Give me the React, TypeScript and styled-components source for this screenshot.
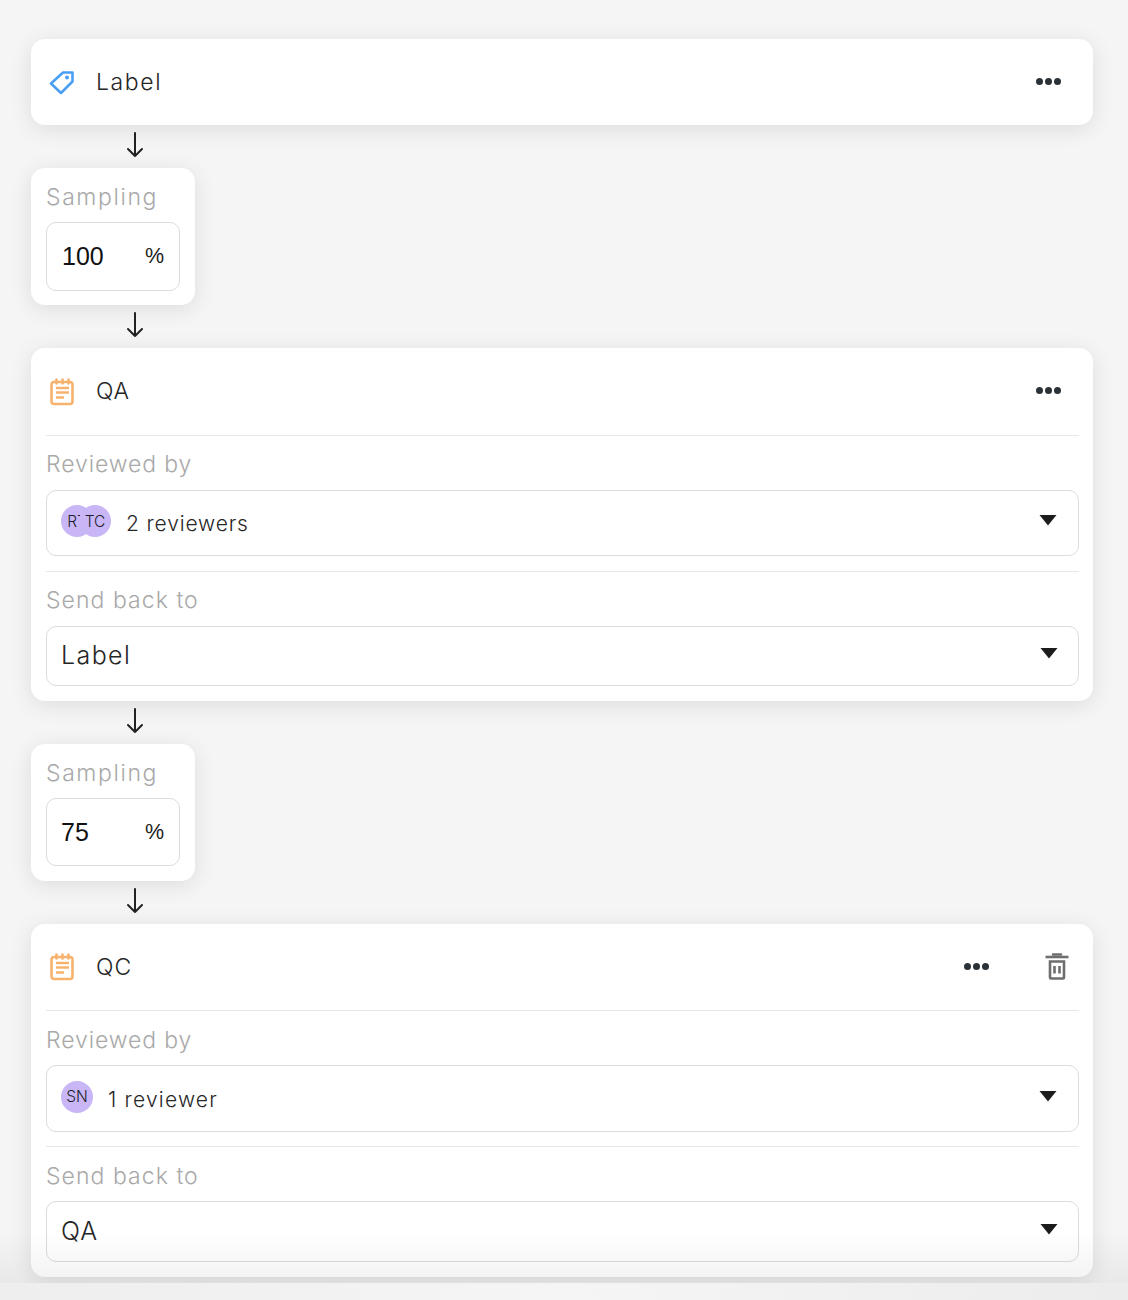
import React from "react";
import styled, { createGlobalStyle } from "styled-components";

const Global = createGlobalStyle`
  html, body { margin: 0; padding: 0; background: #f5f5f5; }
  body { font-family: "Inter", "Liberation Sans", sans-serif; color: #262626; }
`;

const Page = styled.div`
  position: relative;
  width: 1128px;
  height: 1300px;
  overflow: hidden;
  box-sizing: border-box;
  padding: 39px 35px 0 31px;
  display: flex;
  flex-direction: column;
  align-items: flex-start;
`;

const Card = styled.section`
  width: 1062px;
  box-sizing: border-box;
  padding: 0 14px 0 15px;
  background: #fff;
  border-radius: 14px;
  box-shadow: 0 4px 22px rgba(0, 0, 0, 0.1);
`;

const Header = styled.header<{ $h: number; $line?: boolean }>`
  height: ${(p) => p.$h}px;
  padding-left: 3px;
  display: flex;
  align-items: center;
  gap: 21px;
  box-sizing: border-box;
  border-bottom: ${(p) => (p.$line ? "1px solid #e8e8e8" : "none")};
`;

const Title = styled.span<{ $ls: number }>`
  flex: 1;
  font-size: 23px;
  font-weight: 300;
  line-height: 28px;
  letter-spacing: ${(p) => p.$ls}px;
  color: #262626;
  margin-top: -1px;
`;

const MoreBtn = styled.span<{ $mr: number }>`
  display: flex;
  gap: 2px;
  margin: -2px ${(p) => p.$mr}px 0 0;
`;

const Dot = styled.i`
  width: 7px;
  height: 7px;
  border-radius: 50%;
  background: #2b3237;
`;

const TrashWrap = styled.span`
  display: flex;
  margin: 0 10px 0 35px;
`;

const ArrowRow = styled.div`
  height: 43px;
  width: 208px;
  display: flex;
  justify-content: center;
  padding-top: 6px;
  box-sizing: border-box;
`;

const SamplingCard = styled.section`
  width: 164px;
  height: 137px;
  box-sizing: border-box;
  padding: 15px 15px 0;
  background: #fff;
  border-radius: 14px;
  box-shadow: 0 4px 22px rgba(0, 0, 0, 0.1);
`;

const FieldLabel = styled.div<{ $ls: number }>`
  font-size: 23px;
  font-weight: 300;
  line-height: 28px;
  letter-spacing: ${(p) => p.$ls}px;
  color: #a9a9a9;
`;

const PercentBox = styled.div<{ $h: number; $top: number; $pl: number }>`
  height: ${(p) => p.$h}px;
  margin-top: ${(p) => p.$top}px;
  box-sizing: border-box;
  padding: 0 15px 0 ${(p) => p.$pl}px;
  display: flex;
  align-items: center;
  justify-content: space-between;
  border: 1px solid #dcdcdc;
  border-radius: 10px;
  font-family: "Liberation Sans", Arial, sans-serif;
  font-size: 25px;
  color: #111;
`;

const Percent = styled.span`
  font-size: 21.5px;
  color: #222;
`;

const Section = styled.div<{ $h: number; $line?: boolean; $pad: number }>`
  height: ${(p) => p.$h}px;
  box-sizing: border-box;
  padding-top: ${(p) => p.$pad}px;
  border-bottom: ${(p) => (p.$line ? "1px solid #e8e8e8" : "none")};
`;

const SelectBox = styled.div<{ $h: number; $top: number; $pr: number }>`
  height: ${(p) => p.$h}px;
  margin-top: ${(p) => p.$top}px;
  box-sizing: border-box;
  padding: 0 ${(p) => p.$pr}px 0 14px;
  display: flex;
  align-items: center;
  border: 1px solid #dcdcdc;
  border-radius: 10px;
`;

const Avatars = styled.span<{ $mr: number }>`
  display: flex;
  margin-right: ${(p) => p.$mr}px;
`;

const Avatar = styled.span<{ $overlap?: boolean }>`
  width: 32px;
  height: 32px;
  margin-left: ${(p) => (p.$overlap ? "-14px" : "0")};
  border-radius: 50%;
  background: #c8b6f6;
  overflow: hidden;
  display: flex;
  align-items: center;
  justify-content: center;
  white-space: nowrap;
  font-size: 15.5px;
  font-weight: 300;
  color: #1d1d2a;
  margin-top: -4px;
`;

const Names = styled.span<{ $ls: number }>`
  flex: 1;
  font-size: 21px;
  font-weight: 300;
  letter-spacing: ${(p) => p.$ls}px;
  color: #262626;
  margin-top: 1px;
`;

const Value = styled.span<{ $ls: number }>`
  flex: 1;
  font-size: 25px;
  font-weight: 300;
  letter-spacing: ${(p) => p.$ls}px;
  color: #262626;
  margin-top: -2px;
`;

const Caret = styled.svg`
  width: 18px;
  height: 12px;
  margin-top: -6px;
  fill: #1c1c1c;
`;

const Fade = styled.div`
  position: absolute;
  left: 0;
  right: 0;
  top: 1230px;
  height: 53px;
  background: linear-gradient(rgba(0, 0, 0, 0), rgba(0, 0, 0, 0.05));
`;

const Footer = styled.div`
  position: absolute;
  left: 0;
  right: 0;
  top: 1283px;
  height: 17px;
  background: linear-gradient(90deg, #eeeeee, #f5f5f5 50%, #ececec);
`;

const Arrow = () => (
  <ArrowRow>
    <svg width="20" height="28" viewBox="0 0 20 28" fill="none" stroke="#222" strokeWidth="2" strokeLinecap="round" strokeLinejoin="round">
      <path d="M10 2v23M3 18l7 7 7-7" />
    </svg>
  </ArrowRow>
);

const TagIcon = () => (
  <svg width="26" height="26" viewBox="0 0 26 26" fill="none" stroke="#4a9ff5" strokeWidth="2.6" strokeLinejoin="round">
    <path d="M14 3.500h9.500v9L12 24 2 14.500z" />
    <circle cx="18" cy="8.500" r="2" fill="#4a9ff5" stroke="none" />
  </svg>
);

const NoteIcon = () => (
  <svg width="26" height="28" viewBox="0 0 26 28" fill="none" stroke="#f7b26e" strokeWidth="2.6" strokeLinecap="round">
    <rect x="2.500" y="4" width="21" height="22" rx="2.500" />
    <path d="M7.500 1.500v4M13.500 1.500v4M19.500 1.500v4" />
    <path d="M7 10h13M7 14.500h13M7 19.500h8" strokeLinecap="butt" />
  </svg>
);

const TrashIcon = () => (
  <svg width="24" height="28" viewBox="0 0 24 28" fill="none" stroke="#6e6e6e" strokeWidth="2.600">
    <path d="M0.500 4h23" />
    <path d="M8 1.500h8" strokeWidth="2.500" strokeLinecap="round" />
    <path d="M5 8.500h14v16a1 1 0 0 1-1 1H6a1 1 0 0 1-1-1z" />
    <path d="M9.500 13v7.500M14.500 13v7.500" />
  </svg>
);

const More = ({ mr }: { mr: number }) => (
  <MoreBtn $mr={mr}>
    <Dot />
    <Dot />
    <Dot />
  </MoreBtn>
);

const DownCaret = () => (
  <Caret viewBox="0 0 18 12">
    <path d="M0.500 1h17L9 11.500z" />
  </Caret>
);

const Sampling = ({ value, pl, h, top }: { value: string; pl: number; h: number; top: number }) => (
  <SamplingCard>
    <FieldLabel $ls={1.6}>Sampling</FieldLabel>
    <PercentBox $h={h} $top={top} $pl={pl}>
      <span>{value}</span>
      <Percent>%</Percent>
    </PercentBox>
  </SamplingCard>
);

export default function App() {
  return (
    <Page>
      <Global />
      <Card>
        <Header $h={86}>
          <TagIcon />
          <Title $ls={1.6}>Label</Title>
          <More mr={18} />
        </Header>
      </Card>
      <Arrow />
      <Sampling value="100" pl={15} h={69} top={11} />
      <Arrow />
      <Card>
        <Header $h={88} $line>
          <NoteIcon />
          <Title $ls={0.8}>QA</Title>
          <More mr={18} />
        </Header>
        <Section $h={136} $line $pad={14}>
          <FieldLabel $ls={0.9}>Reviewed by</FieldLabel>
          <SelectBox $h={66} $top={12} $pr={21}>
            <Avatars $mr={15}>
              <Avatar>RT</Avatar>
              <Avatar $overlap>TC</Avatar>
            </Avatars>
            <Names $ls={0.85}>2 reviewers</Names>
            <DownCaret />
          </SelectBox>
        </Section>
        <Section $h={129} $pad={14}>
          <FieldLabel $ls={1.05}>Send back to</FieldLabel>
          <SelectBox $h={60} $top={12} $pr={20}>
            <Value $ls={1.4}>Label</Value>
            <DownCaret />
          </SelectBox>
        </Section>
      </Card>
      <Arrow />
      <Sampling value="75" pl={14} h={68} top={11} />
      <Arrow />
      <Card>
        <Header $h={87} $line>
          <NoteIcon />
          <Title $ls={1}>QC</Title>
          <More mr={0} />
          <TrashWrap>
            <TrashIcon />
          </TrashWrap>
        </Header>
        <Section $h={136} $line $pad={15}>
          <FieldLabel $ls={0.9}>Reviewed by</FieldLabel>
          <SelectBox $h={67} $top={11} $pr={21}>
            <Avatars $mr={15}>
              <Avatar>SN</Avatar>
            </Avatars>
            <Names $ls={1.2}>1 reviewer</Names>
            <DownCaret />
          </SelectBox>
        </Section>
        <Section $h={130} $pad={15}>
          <FieldLabel $ls={1.05}>Send back to</FieldLabel>
          <SelectBox $h={61} $top={11} $pr={20}>
            <Value $ls={1}>QA</Value>
            <DownCaret />
          </SelectBox>
        </Section>
      </Card>
      <Fade />
      <Footer />
    </Page>
  );
}
